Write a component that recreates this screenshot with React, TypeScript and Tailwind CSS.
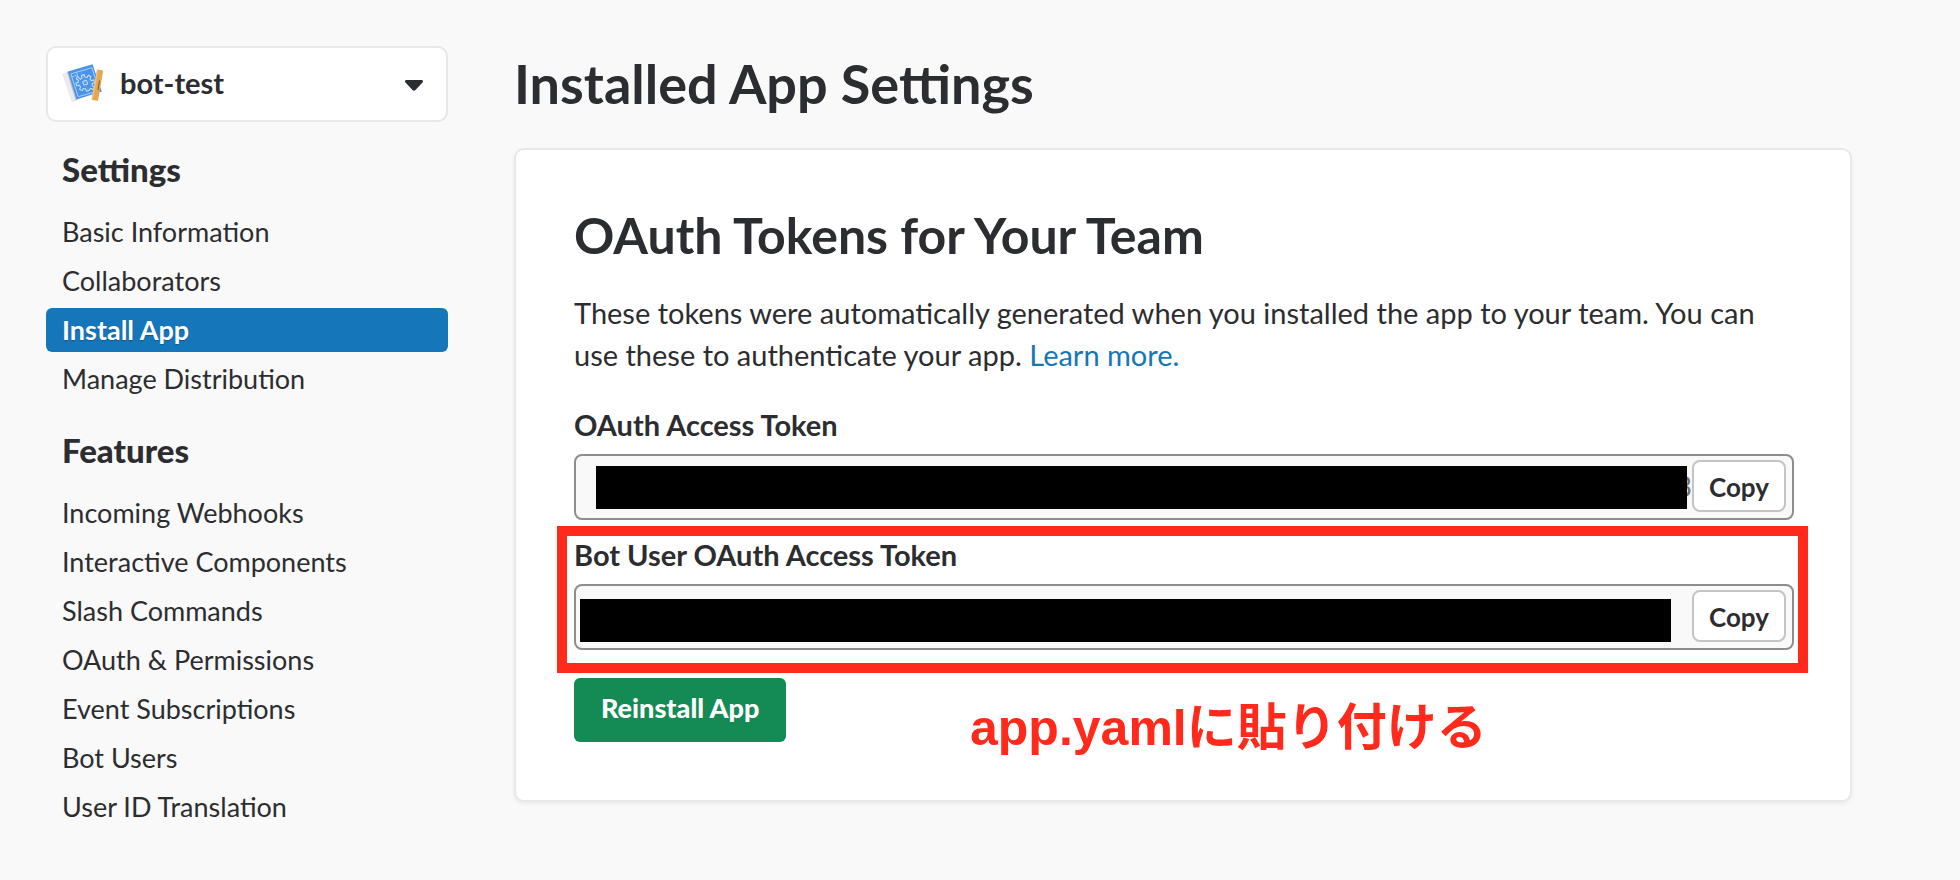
import React from "react";

const settings = ["Basic Information", "Collaborators", "Install App", "Manage Distribution"];
const features = [
  "Incoming Webhooks",
  "Interactive Components",
  "Slash Commands",
  "OAuth & Permissions",
  "Event Subscriptions",
  "Bot Users",
  "User ID Translation",
];

function AppIcon() {
  return (
    <svg viewBox="0 0 40 40" className="size-10 shrink-0 overflow-visible" aria-hidden="true">
      <path d="M-1.500 10 4 8 13.500 36 8 38.500Z" fill="#a8a8a8" opacity=".35" />
      <path d="M-.8 9.200 4.400 7.400 13.400 35.500 7.800 37.600Z" fill="#ececec" />
      <path d="M2.800 8 4.400 7.400 13.400 35.500 11.600 36.200Z" fill="#bdbdbd" />
      <path d="M4 7.600 28.500 .2 37.800 27.500 12.600 35.600Z" fill="#4a93ea" />
      <g transform="matrix(.958 -.28 .306 .952 4 7.6)" fill="none" stroke="#a9d0fb">
        <path d="M2 3H24V27H2Z" strokeWidth=".9" />
        <path d="M2 6H8V3" strokeWidth=".8" />
        <path d="M13 3v24M2 15.200h22" stroke="#74aef3" strokeWidth=".5" />
        <path
          d="M11.500 7.500h3v2.500l2 1 1.800-1.800 2 2-1.600 2 .8 2H22v3h-2.500l-.8 2 1.600 2-2 2-1.800-1.700-2 1V24h-3v-2.500l-2-1-1.800 1.700-2-2 1.600-2-.8-2H4v-3h2.500l.8-2-1.600-2 2-2L9.500 11l2-1Z"
          stroke="#c9e2fd"
          strokeWidth="1"
        />
        <path d="M11 13.500h4v4h-4Z" stroke="#c9e2fd" strokeWidth=".9" />
      </g>
      <path d="M33 5.500 39.200 6.500 34 37 27.600 35.800Z" fill="#e3a853" />
      <path d="M33 5.500 34.300 5.700 28.900 36 27.600 35.800Z" fill="#f0c27c" />
      <path d="M35.600 16.500 34 26" stroke="#8a5a1d" strokeWidth="1" />
    </svg>
  );
}

function NavGroup({ title, items, active }: { title: string; items: string[]; active?: string }) {
  return (
    <section>
      <h3 className="px-4 text-[33px]/[38px] font-black">{title}</h3>
      <ul className="mt-[22px] flex flex-col gap-[5px]">
        {items.map((item) => (
          <li key={item}>
            <a
              href="#"
              className={
                item === active
                  ? "block rounded-md bg-[#1576b9] px-4 text-[27px]/11 font-bold text-white [text-shadow:0_1px_1px_rgba(0,0,0,0.25)]"
                  : "block rounded-md px-4 text-[27px]/11"
              }
            >
              {item}
            </a>
          </li>
        ))}
      </ul>
    </section>
  );
}

function TokenField({ id, label, value, mask }: { id: string; label: string; value: string; mask: string }) {
  return (
    <div>
      <label htmlFor={id} className="block text-[29px]/10 font-bold">
        {label}
      </label>
      <div className="relative mt-[9px] flex h-[66px] items-start rounded-lg border-2 border-[#8d8d8d] bg-[#f9f9f9] pt-1 pr-1.5">
        <input
          id={id}
          readOnly
          defaultValue={value}
          className="h-[52px] min-w-0 flex-1 bg-transparent text-right text-[28px] text-[#717274] outline-none"
        />
        <button
          type="button"
          className="h-[52px] w-[94px] rounded-lg border-2 border-[#c4c4c4] bg-white pt-0.5 text-[26px]/8 font-bold"
        >
          Copy
        </button>
        <span className={mask} />
      </div>
    </div>
  );
}

export default function App() {
  return (
    <div className="flex min-h-screen gap-[66px] bg-[#f9f9f9] pt-[46px] pr-[108px] pb-10 pl-[46px] font-['Lato',sans-serif] text-[#2c2d30]">
      <aside className="w-[402px] shrink-0">
        <button
          type="button"
          className="flex h-[76px] w-full items-center rounded-[10px] border-2 border-[#e8e8e8] bg-white px-4 text-left text-[29px] font-bold"
        >
          <AppIcon />
          <span className="flex-1 pb-0.5 pl-4">bot-test</span>
          <svg viewBox="0 0 18 11" className="mt-0.5 mr-[7px] h-[11px] w-[18px]" aria-hidden="true">
            <path d="M1.500 0h15c1.400 0 2 1.500 1 2.500l-7 7.500q-1.500 1.500-3 0l-7-7.500C-.500 1.500.100 0 1.500 0Z" fill="#2c2d30" />
          </svg>
        </button>
        <nav className="mt-7 flex flex-col gap-[30px]">
          <NavGroup title="Settings" items={settings} active="Install App" />
          <NavGroup title="Features" items={features} />
        </nav>
      </aside>

      <main className="min-w-0 flex-1">
        <h1 className="text-[54px]/[76px] font-bold">Installed App Settings</h1>
        <section className="mt-[26px] rounded-[10px] border-2 border-[#e8e8e8] bg-white pt-[55px] pr-14 pb-[58px] pl-[58px] shadow-[0_2px_4px_rgba(0,0,0,0.06)]">
          <h2 className="text-[50px]/[60px] font-bold">OAuth Tokens for Your Team</h2>
          <p className="mt-[27px] text-[29px]/[42px]">
            These tokens were automatically generated when you installed the app to your team. You can use these to
            authenticate your app.{" "}
            <a href="#" className="text-[#1576b9]">
              Learn more.
            </a>
          </p>
          <div className="mt-[29px]">
            <TokenField
              id="oauth-token"
              label="OAuth Access Token"
              value="3"
              mask="absolute top-2.5 right-[105px] left-[20px] h-[43px] bg-black"
            />
          </div>
          <div className="relative mt-[15px]">
            <TokenField
              id="bot-token"
              label="Bot User OAuth Access Token"
              value=""
              mask="absolute top-[13px] right-[121px] left-1 h-[43px] bg-black"
            />
            <div className="pointer-events-none absolute -top-[9px] -right-3.5 -bottom-[23px] -left-[17px] border-10 border-[#ff2a1c]" />
          </div>
          <div className="relative mt-7">
            <button
              type="button"
              className="h-16 rounded-md bg-[#148a54] px-[27px] pb-1 text-[27px] font-black text-white"
            >
              Reinstall App
            </button>
            <p className="absolute top-5 left-[396px] font-['Liberation_Sans','Noto_Sans_CJK_JP',sans-serif] text-[50px]/[60px] font-bold whitespace-nowrap text-[#ff2a1c]">
              app.yamlに貼り付ける
            </p>
          </div>
        </section>
      </main>
    </div>
  );
}
